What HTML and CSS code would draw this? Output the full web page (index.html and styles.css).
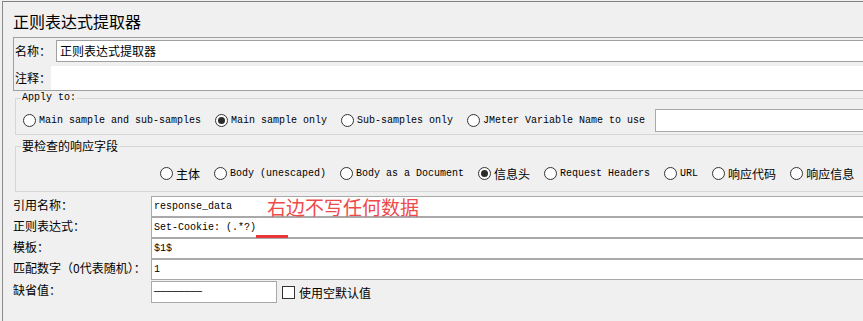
FILE: index.html
```html
<!DOCTYPE html>
<html lang="zh-CN">
<head>
    <meta charset="UTF-8">
    <title>正则表达式提取器</title>
    <link rel="stylesheet" href="styles.css">
</head>
<body>
    <div class="frame">
        <h1 class="title">正则表达式提取器</h1>

        <!-- Name / comment -->
        <div class="name-panel">
            <div class="name-row">
                <label class="name-label">名称：</label>
                <div class="field name-field">正则表达式提取器</div>
            </div>
            <div class="comment-row">
                <label class="comment-label">注释：</label>
                <div class="comment-field"></div>
            </div>
        </div>

        <!-- Apply to -->
        <fieldset class="group">
            <legend class="mono">Apply to:</legend>
            <div class="options apply-options">
                <span class="opt"><span class="radio"></span><span class="mono">Main sample and sub-samples</span></span>
                <span class="opt"><span class="radio checked"></span><span class="mono">Main sample only</span></span>
                <span class="opt"><span class="radio"></span><span class="mono">Sub-samples only</span></span>
                <span class="opt"><span class="radio"></span><span class="mono">JMeter Variable Name to use</span></span>
                <div class="field var-field"></div>
            </div>
        </fieldset>

        <!-- Field to check -->
        <fieldset class="group scope">
            <legend>要检查的响应字段</legend>
            <div class="options scope-options">
                <span class="opt"><span class="radio"></span><span class="cn">主体</span></span>
                <span class="opt"><span class="radio"></span><span class="mono">Body (unescaped)</span></span>
                <span class="opt"><span class="radio"></span><span class="mono">Body as a Document</span></span>
                <span class="opt"><span class="radio checked"></span><span class="cn">信息头</span></span>
                <span class="opt"><span class="radio"></span><span class="mono">Request Headers</span></span>
                <span class="opt"><span class="radio"></span><span class="mono">URL</span></span>
                <span class="opt"><span class="radio"></span><span class="cn">响应代码</span></span>
                <span class="opt"><span class="radio"></span><span class="cn">响应信息</span></span>
            </div>
        </fieldset>

        <!-- Extractor settings -->
        <div class="form-grid">
            <label>引用名称：</label>
            <div class="field cell mono">response_data<span class="note">右边不写任何数据</span></div>

            <label>正则表达式：</label>
            <div class="field cell mono">Set-Cookie: (.*?)<span class="mark"></span></div>

            <label>模板：</label>
            <div class="field cell mono">$1$</div>

            <label>匹配数字（0代表随机）：</label>
            <div class="field cell mono">1</div>

            <label class="default-label">缺省值：</label>
            <div class="default-row">
                <div class="field short-field mono">————————</div>
                <span class="checkbox"></span>
                <span class="cn">使用空默认值</span>
            </div>
        </div>
    </div>
</body>
</html>
```

FILE: styles.css
```css
* {
    margin: 0;
    padding: 0;
    box-sizing: border-box;
}

html, body {
    overflow: hidden;
}

body {
    background: #f0f0f0;
    color: #000;
    font-family: "Noto Sans CJK SC", "Noto Sans", sans-serif;
    font-size: 12px;
    height: 321px;
}

.mono {
    font-family: "Liberation Mono", "Noto Sans CJK SC", monospace;
    font-size: 10px;
}

.cn {
    font-family: "Noto Sans CJK SC", sans-serif;
    font-size: 12px;
}

.frame {
    width: 960px;
    height: 330px;
    margin: 1px 0 0 2px;
    border-top: 1px solid #808080;
    border-left: 1px solid #8a8a8a;
    padding-left: 10px;
}

.title {
    font-size: 16px;
    font-weight: normal;
    line-height: 20px;
    margin: 9px 0 6px;
}

/* name / comment panel */
.name-panel {
    border: 1px solid #a0a0a0;
    padding: 1px 0 0 1px;
}

.name-row {
    display: flex;
    height: 23px;
}

.name-label {
    flex: none;
    width: 41px;
    line-height: 22px;
    margin-top: 1px;
    white-space: nowrap;
}

.field {
    background: #fff;
    border: 1px solid #a9a9a9;
}

.name-field {
    flex: 1;
    height: 22px;
    margin-top: 1px;
    border-color: #a0a0a0;
    line-height: 20px;
    padding-left: 3px;
}

.comment-row {
    display: flex;
    height: 24px;
    margin-top: 4px;
}

.comment-label {
    flex: none;
    width: 36px;
    line-height: 24px;
    white-space: nowrap;
}

.comment-field {
    flex: 1;
    background: #fff;
}

/* option groups */
.group {
    border: 1px solid #d6d6d6;
    margin: 1px 0 0 2px;
    padding: 4px 0 2px 5px;
}

.group legend {
    padding: 0 1px;
    line-height: 12px;
}

.scope {
    margin-top: 4px;
    padding: 8px 0 6px 5px;
}

.scope legend {
    line-height: 14px;
}

.options {
    display: flex;
    align-items: center;
    gap: 14px;
    height: 24px;
}

.apply-options {
    margin-left: 2px;
}

.scope-options {
    margin-left: 139px;
}

.opt {
    display: flex;
    align-items: center;
    gap: 3px;
    white-space: nowrap;
}

.radio {
    position: relative;
    width: 13px;
    height: 13px;
    border: 1px solid #333;
    border-radius: 50%;
    background: #fff;
}

.radio.checked::after {
    content: "";
    position: absolute;
    left: 2px;
    top: 2px;
    width: 7px;
    height: 7px;
    border-radius: 50%;
    background: #2b2b2b;
}

.var-field {
    flex: 1;
    height: 23px;
    margin-left: -4px;
}

/* extractor settings */
.form-grid {
    display: grid;
    grid-template-columns: 138px 1fr;
    margin-top: 4px;
}

.form-grid label {
    line-height: 18px;
    white-space: nowrap;
}

.cell {
    position: relative;
    height: 21px;
    line-height: 19px;
    padding-left: 2px;
}

.note {
    position: absolute;
    left: 115px;
    top: 0;
    font-family: "Noto Sans CJK SC", sans-serif;
    font-size: 19px;
    line-height: 19px;
    color: #ef4a4a;
}

.mark {
    position: absolute;
    left: 104px;
    top: 17px;
    width: 32px;
    height: 3px;
    background: #e8363b;
}

.default-label {
    margin-top: 1px;
}

.default-row {
    display: flex;
    align-items: center;
    margin-top: 1px;
    height: 22px;
}

.short-field {
    width: 126px;
    height: 22px;
    line-height: 20px;
    padding-left: 2px;
}

.checkbox {
    width: 13px;
    height: 13px;
    border: 1px solid #333;
    background: #fff;
    margin: 0 4px 0 5px;
}
```
